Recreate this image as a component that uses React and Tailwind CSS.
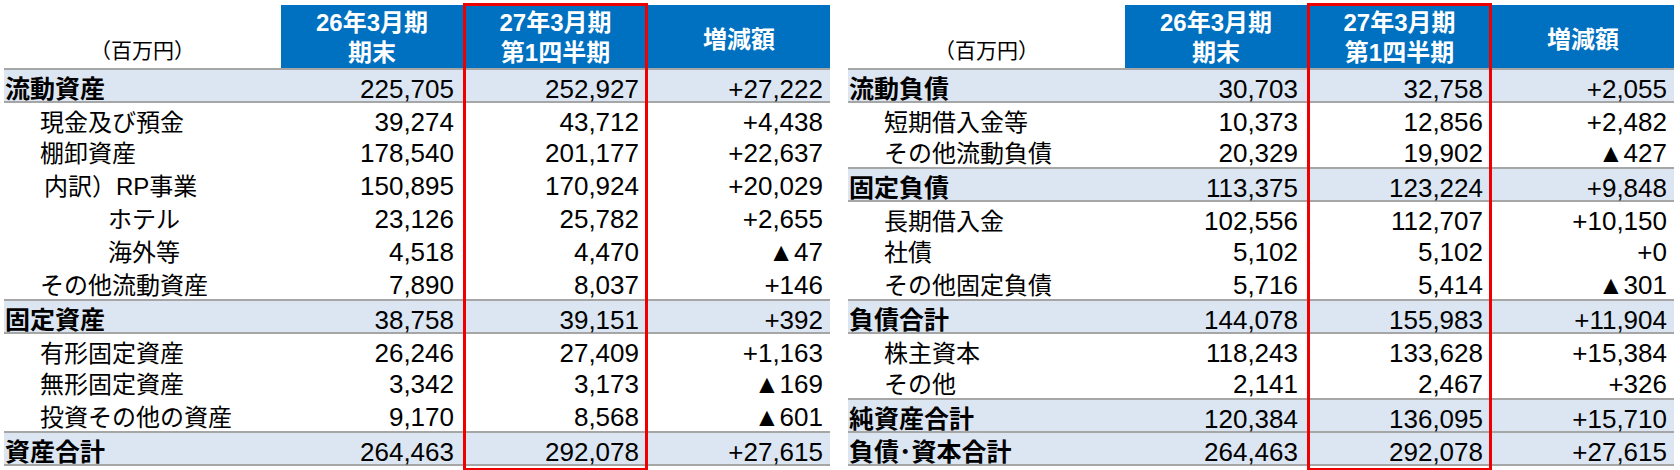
const assets = [
  { label: '流動資産', a: '225,705', b: '252,927', c: '+27,222', kind: 'head' },
  { label: '現金及び預金', a: '39,274', b: '43,712', c: '+4,438' },
  { label: '棚卸資産', a: '178,540', b: '201,177', c: '+22,637' },
  { label: '内訳）RP事業', a: '150,895', b: '170,924', c: '+20,029', kind: 'note' },
  { label: 'ホテル', a: '23,126', b: '25,782', c: '+2,655', kind: 'sub' },
  { label: '海外等', a: '4,518', b: '4,470', c: '▲47', kind: 'sub' },
  { label: 'その他流動資産', a: '7,890', b: '8,037', c: '+146' },
  { label: '固定資産', a: '38,758', b: '39,151', c: '+392', kind: 'head' },
  { label: '有形固定資産', a: '26,246', b: '27,409', c: '+1,163' },
  { label: '無形固定資産', a: '3,342', b: '3,173', c: '▲169' },
  { label: '投資その他の資産', a: '9,170', b: '8,568', c: '▲601' },
  { label: '資産合計', a: '264,463', b: '292,078', c: '+27,615', kind: 'head' },
]

const liabilities = [
  { label: '流動負債', a: '30,703', b: '32,758', c: '+2,055', kind: 'head' },
  { label: '短期借入金等', a: '10,373', b: '12,856', c: '+2,482' },
  { label: 'その他流動負債', a: '20,329', b: '19,902', c: '▲427' },
  { label: '固定負債', a: '113,375', b: '123,224', c: '+9,848', kind: 'head' },
  { label: '長期借入金', a: '102,556', b: '112,707', c: '+10,150' },
  { label: '社債', a: '5,102', b: '5,102', c: '+0' },
  { label: 'その他固定負債', a: '5,716', b: '5,414', c: '▲301' },
  { label: '負債合計', a: '144,078', b: '155,983', c: '+11,904', kind: 'head' },
  { label: '株主資本', a: '118,243', b: '133,628', c: '+15,384' },
  { label: 'その他', a: '2,141', b: '2,467', c: '+326' },
  { label: '純資産合計', a: '120,384', b: '136,095', c: '+15,710', kind: 'head' },
  { label: '負債･資本合計', a: '264,463', b: '292,078', c: '+27,615', kind: 'head' },
]

const font = 'font-["Liberation_Sans","Noto_Sans_CJK_JP",sans-serif]'
const cols = 'grid grid-cols-[277px_182px_185px_182px]'
const headCell = 'flex flex-col items-center justify-center bg-[#0070c0] text-[24px] font-bold leading-[30px] text-white'

function labelClass(kind) {
  if (kind === 'head') return 'pl-[1px] text-[25px] font-bold'
  if (kind === 'note') return 'pl-[40px] text-[24px]'
  if (kind === 'sub') return 'pl-[104px] text-[24px]'
  return 'pl-[36px] text-[24px]'
}

function SheetTable({ rows }) {
  return (
    <div className={`relative w-[826px] ${font} text-black`}>
      <div className={`${cols} h-[63px]`}>
        <div className="flex items-end justify-center pb-[2px] text-[21px]">（百万円）</div>
        <div className={`${headCell} pt-[3px]`}>
          <span>26年3月期</span>
          <span>期末</span>
        </div>
        <div className={`${headCell} pt-[3px]`}>
          <span>27年3月期</span>
          <span>第1四半期</span>
        </div>
        <div className={`${headCell} pt-[6px]`}>増減額</div>
      </div>

      {rows.map((row, i) => {
        const shaded = row.kind === 'head'
        const prevShaded = i > 0 && rows[i - 1].kind === 'head'
        const last = i === rows.length - 1
        return (
          <div
            key={row.label}
            className={`${cols} h-[33px] items-center ${shaded ? 'bg-[#dce6f2]' : ''} ${shaded || prevShaded || i === 0 ? 'border-t-2 border-[#a6a6a6]' : ''} ${last ? 'h-[35px] border-b-2 border-[#a6a6a6]' : ''}`}
          >
            <div className={`whitespace-nowrap ${labelClass(row.kind)}`}>{row.label}</div>
            <div className="pr-[9px] text-right text-[26px]">{row.a}</div>
            <div className="pr-[9px] text-right text-[26px]">{row.b}</div>
            <div className="pr-[7px] text-right text-[26px]">{row.c}</div>
          </div>
        )
      })}

      {/* highlight around the latest quarter */}
      <div className="pointer-events-none absolute -top-[2px] -bottom-[1px] left-[459px] w-[185px] border-[3px] border-[#ee0000]" />
    </div>
  )
}

export default function App() {
  return (
    <div className="flex h-[470px] w-[1680px] gap-[18px] overflow-hidden bg-white pl-[4px] pt-[5px]">
      <SheetTable rows={assets} />
      <SheetTable rows={liabilities} />
    </div>
  )
}
